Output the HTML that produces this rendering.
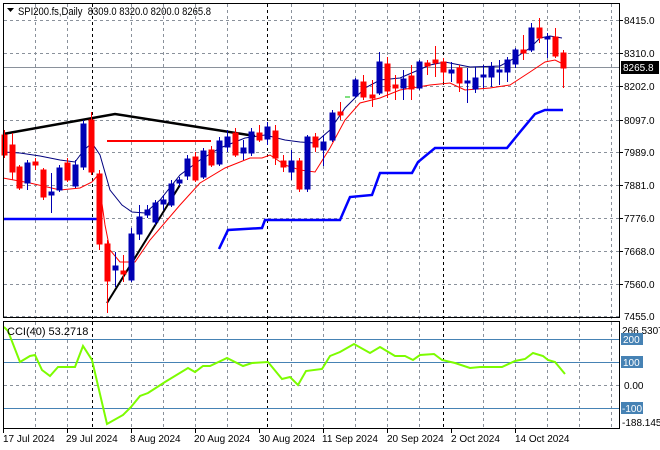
<!DOCTYPE html>
<html><head><meta charset="utf-8"><style>
html,body{margin:0;padding:0;background:#fff;}
svg{display:block;font-family:"Liberation Sans",sans-serif;}
</style></head><body>
<svg width="660" height="450" viewBox="0 0 660 450" xmlns="http://www.w3.org/2000/svg">
<rect width="660" height="450" fill="#fff"/>
<g stroke="#8a919b" stroke-dasharray="3,3" stroke-width="1">
<line x1="4" y1="20.5" x2="619" y2="20.5"/><line x1="4" y1="53.5" x2="619" y2="53.5"/><line x1="4" y1="86.5" x2="619" y2="86.5"/><line x1="4" y1="120.5" x2="619" y2="120.5"/><line x1="4" y1="152.5" x2="619" y2="152.5"/><line x1="4" y1="185.5" x2="619" y2="185.5"/><line x1="4" y1="218.5" x2="619" y2="218.5"/><line x1="4" y1="251.5" x2="619" y2="251.5"/><line x1="4" y1="284.5" x2="619" y2="284.5"/><line x1="4" y1="316.5" x2="619" y2="316.5"/>
<line x1="4" y1="385.5" x2="619" y2="385.5"/>
</g>
<g stroke="#8a919b" stroke-dasharray="3,3" stroke-width="1">
<line x1="35.5" y1="4" x2="35.5" y2="428"/><line x1="67.5" y1="4" x2="67.5" y2="428"/><line x1="131.5" y1="4" x2="131.5" y2="428"/><line x1="163.5" y1="4" x2="163.5" y2="428"/><line x1="195.5" y1="4" x2="195.5" y2="428"/><line x1="227.5" y1="4" x2="227.5" y2="428"/><line x1="291.5" y1="4" x2="291.5" y2="428"/><line x1="323.5" y1="4" x2="323.5" y2="428"/><line x1="355.5" y1="4" x2="355.5" y2="428"/><line x1="387.5" y1="4" x2="387.5" y2="428"/><line x1="419.5" y1="4" x2="419.5" y2="428"/><line x1="483.5" y1="4" x2="483.5" y2="428"/><line x1="515.5" y1="4" x2="515.5" y2="428"/><line x1="547.5" y1="4" x2="547.5" y2="428"/><line x1="579.5" y1="4" x2="579.5" y2="428"/><line x1="611.5" y1="4" x2="611.5" y2="428"/>
</g>
<g stroke="#000" stroke-dasharray="3,3" stroke-width="1">
<line x1="92.5" y1="4" x2="92.5" y2="428"/><line x1="267.5" y1="4" x2="267.5" y2="428"/><line x1="443.5" y1="4" x2="443.5" y2="428"/>
</g>
<line x1="4" y1="67.5" x2="619" y2="67.5" stroke="#8a919b"/>
<g stroke="#4682b4" stroke-width="1">
<line x1="4" y1="339.5" x2="619" y2="339.5"/><line x1="4" y1="362.5" x2="619" y2="362.5"/><line x1="4" y1="408.5" x2="619" y2="408.5"/>
</g>
<polyline fill="none" stroke="#0000ff" stroke-width="2.5" points="3,219 99,219"/>
<polyline fill="none" stroke="#0000ff" stroke-width="2.5" points="219,249 228,230 262,228 265,220 340,220 350,197 372,195 380,173 412,173 418,162 435,148 507,148 520,132 535,114 545,110 563,110"/>
<line x1="107" y1="141" x2="211" y2="141" stroke="#ff0000" stroke-width="2"/>
<polyline fill="none" stroke="#00007f" stroke-width="1" points="3,152 20,153 40,156 60,160 75,162 84,150 92,143 100,155 110,190 122,205 132,212 145,213 160,200 180,175 200,160 220,148 245,138 265,135 285,140 300,142 315,143 330,130 345,108 365,88 380,80 400,78 430,65 445,62 460,65 470,67 500,66 515,58 530,48 540,38 550,36 562,38"/>
<polyline fill="none" stroke="#ff0000" stroke-width="1" points="3,178 30,183 60,190 80,188 92,182 98,175 105,225 110,250 120,262 135,262 150,240 180,205 200,183 225,168 250,158 262,158 270,155 285,165 300,170 315,172 330,148 345,120 360,103 380,98 400,90 430,85 450,83 465,90 490,88 510,85 530,72 545,62 555,60 565,65"/>
<polyline fill="none" stroke="#000" stroke-width="2.5" points="3,134 115,114 255,136"/>
<line x1="107" y1="303" x2="180" y2="185" stroke="#000" stroke-width="2"/>
<line x1="345" y1="97" x2="350" y2="97" stroke="#00c000" stroke-width="1"/>
<g stroke-width="1">
<g stroke="#ff0000" fill="#ff0000">
<line x1="4.5" y1="130" x2="4.5" y2="158"/><rect x="2" y="135" width="5" height="20"/>
<line x1="12.5" y1="133" x2="12.5" y2="180"/><rect x="10" y="145" width="5" height="27"/>
<line x1="19.5" y1="165" x2="19.5" y2="190"/><rect x="17" y="167" width="5" height="21"/>
<line x1="35.5" y1="158" x2="35.5" y2="170"/><rect x="33" y="162" width="5" height="3"/>
<line x1="43.5" y1="168" x2="43.5" y2="200"/><rect x="41" y="170" width="5" height="27"/>
<line x1="67.5" y1="158" x2="67.5" y2="182"/><rect x="65" y="163" width="5" height="17"/>
<line x1="91.5" y1="112" x2="91.5" y2="175"/><rect x="89" y="120" width="5" height="52"/>
<line x1="99.5" y1="170" x2="99.5" y2="250"/><rect x="97" y="174" width="5" height="70"/>
<line x1="107.5" y1="240" x2="107.5" y2="313"/><rect x="105" y="244" width="5" height="37"/>
<line x1="123.5" y1="255" x2="123.5" y2="282"/><rect x="121" y="271" width="5" height="3"/>
<line x1="195.5" y1="152" x2="195.5" y2="182"/><rect x="193" y="157" width="5" height="23"/>
<line x1="211.5" y1="146" x2="211.5" y2="167"/><rect x="209" y="150" width="5" height="15"/>
<line x1="235.5" y1="128" x2="235.5" y2="157"/><rect x="233" y="133" width="5" height="22"/>
<line x1="259.5" y1="125" x2="259.5" y2="142"/><rect x="257" y="133" width="5" height="7"/>
<line x1="275.5" y1="125" x2="275.5" y2="165"/><rect x="273" y="131" width="5" height="27"/>
<line x1="283.5" y1="155" x2="283.5" y2="172"/><rect x="281" y="161" width="5" height="6"/>
<line x1="299.5" y1="158" x2="299.5" y2="192"/><rect x="297" y="161" width="5" height="28"/>
<line x1="315.5" y1="133" x2="315.5" y2="152"/><rect x="313" y="137" width="5" height="10"/>
<line x1="340.5" y1="102" x2="340.5" y2="120"/><rect x="338" y="112" width="5" height="3"/>
<line x1="363.5" y1="75" x2="363.5" y2="100"/><rect x="361" y="82" width="5" height="15"/>
<line x1="372.5" y1="80" x2="372.5" y2="107"/><rect x="370" y="95" width="5" height="3"/>
<line x1="387.5" y1="57" x2="387.5" y2="98"/><rect x="385" y="64" width="5" height="27"/>
<line x1="395.5" y1="75" x2="395.5" y2="100"/><rect x="393" y="85" width="5" height="3"/>
<line x1="411.5" y1="65" x2="411.5" y2="100"/><rect x="409" y="76" width="5" height="13"/>
<line x1="427.5" y1="60" x2="427.5" y2="75"/><rect x="425" y="63" width="5" height="3"/>
<line x1="435.5" y1="46" x2="435.5" y2="77"/><rect x="433" y="60" width="5" height="3"/>
<line x1="443.5" y1="58" x2="443.5" y2="82"/><rect x="441" y="62" width="5" height="10"/>
<line x1="459.5" y1="65" x2="459.5" y2="92"/><rect x="457" y="68" width="5" height="15"/>
<line x1="523.5" y1="35" x2="523.5" y2="60"/><rect x="521" y="50" width="5" height="3"/>
<line x1="539.5" y1="18" x2="539.5" y2="43"/><rect x="537" y="28" width="5" height="10"/>
<line x1="555.5" y1="28" x2="555.5" y2="58"/><rect x="553" y="37" width="5" height="19"/>
<line x1="563.5" y1="50" x2="563.5" y2="88"/><rect x="561" y="53" width="5" height="15"/>
</g>
<g stroke="#0000b4" fill="#0000b4">
<line x1="27.5" y1="160" x2="27.5" y2="190"/><rect x="25" y="163" width="5" height="20"/>
<line x1="51.5" y1="173" x2="51.5" y2="213"/><rect x="49" y="192" width="5" height="3"/>
<line x1="59.5" y1="165" x2="59.5" y2="192"/><rect x="57" y="168" width="5" height="22"/>
<line x1="75.5" y1="160" x2="75.5" y2="188"/><rect x="73" y="165" width="5" height="21"/>
<line x1="83.5" y1="120" x2="83.5" y2="170"/><rect x="81" y="124" width="5" height="43"/>
<line x1="115.5" y1="252" x2="115.5" y2="287"/><rect x="113" y="266" width="5" height="4"/>
<line x1="131.5" y1="228" x2="131.5" y2="282"/><rect x="129" y="234" width="5" height="46"/>
<line x1="139.5" y1="205" x2="139.5" y2="240"/><rect x="137" y="217" width="5" height="17"/>
<line x1="147.5" y1="205" x2="147.5" y2="218"/><rect x="145" y="210" width="5" height="5"/>
<line x1="155.5" y1="200" x2="155.5" y2="225"/><rect x="153" y="203" width="5" height="19"/>
<line x1="163.5" y1="195" x2="163.5" y2="210"/><rect x="161" y="200" width="5" height="4"/>
<line x1="171.5" y1="180" x2="171.5" y2="207"/><rect x="169" y="184" width="5" height="21"/>
<line x1="179.5" y1="177" x2="179.5" y2="186"/><rect x="177" y="180" width="5" height="3"/>
<line x1="187.5" y1="155" x2="187.5" y2="180"/><rect x="185" y="159" width="5" height="17"/>
<line x1="203.5" y1="148" x2="203.5" y2="179"/><rect x="201" y="151" width="5" height="26"/>
<line x1="219.5" y1="137" x2="219.5" y2="166"/><rect x="217" y="141" width="5" height="23"/>
<line x1="227.5" y1="130" x2="227.5" y2="152"/><rect x="225" y="137" width="5" height="10"/>
<line x1="243.5" y1="140" x2="243.5" y2="160"/><rect x="241" y="148" width="5" height="5"/>
<line x1="251.5" y1="128" x2="251.5" y2="156"/><rect x="249" y="132" width="5" height="21"/>
<line x1="267.5" y1="122" x2="267.5" y2="145"/><rect x="265" y="127" width="5" height="12"/>
<line x1="291.5" y1="150" x2="291.5" y2="180"/><rect x="289" y="161" width="5" height="11"/>
<line x1="307.5" y1="135" x2="307.5" y2="192"/><rect x="305" y="137" width="5" height="52"/>
<line x1="323.5" y1="135" x2="323.5" y2="166"/><rect x="321" y="142" width="5" height="8"/>
<line x1="332.5" y1="110" x2="332.5" y2="142"/><rect x="330" y="113" width="5" height="27"/>
<line x1="355.5" y1="78" x2="355.5" y2="98"/><rect x="353" y="80" width="5" height="16"/>
<line x1="379.5" y1="52" x2="379.5" y2="95"/><rect x="377" y="62" width="5" height="31"/>
<line x1="403.5" y1="70" x2="403.5" y2="100"/><rect x="401" y="79" width="5" height="9"/>
<line x1="419.5" y1="60" x2="419.5" y2="90"/><rect x="417" y="62" width="5" height="26"/>
<line x1="451.5" y1="62" x2="451.5" y2="82"/><rect x="449" y="70" width="5" height="3"/>
<line x1="467.5" y1="68" x2="467.5" y2="103"/><rect x="465" y="81" width="5" height="2"/>
<line x1="475.5" y1="67" x2="475.5" y2="93"/><rect x="473" y="78" width="5" height="11"/>
<line x1="483.5" y1="65" x2="483.5" y2="88"/><rect x="481" y="75" width="5" height="2"/>
<line x1="491.5" y1="62" x2="491.5" y2="87"/><rect x="489" y="67" width="5" height="10"/>
<line x1="499.5" y1="60" x2="499.5" y2="85"/><rect x="497" y="70" width="5" height="2"/>
<line x1="507.5" y1="57" x2="507.5" y2="82"/><rect x="505" y="60" width="5" height="12"/>
<line x1="515.5" y1="48" x2="515.5" y2="68"/><rect x="513" y="50" width="5" height="14"/>
<line x1="531.5" y1="23" x2="531.5" y2="52"/><rect x="529" y="28" width="5" height="22"/>
<line x1="547.5" y1="33" x2="547.5" y2="58"/><rect x="545" y="37" width="5" height="2"/>
</g>
</g>
<polyline fill="none" stroke="#7cfc00" stroke-width="2" points="4,327 8,331 20,362 30,356 35,355 42,370 50,376 58,367 75,367 83,346 92,360 107,424 123,415 131,407 140,396 148,393 165,382 188,368 195,372 203,366 210,366 227,358 243,366 252,363 268,362 282,379 290,377 298,385 306,371 322,369 330,356 340,352 354,344 370,353 380,347 395,356 405,356 413,360 420,355 434,354 442,360 455,363 470,368 480,367 502,367 515,361 525,359 533,353 543,356 548,360 555,362 565,374"/>
<rect x="3.5" y="3.5" width="616" height="314" fill="none" stroke="#000"/>
<rect x="3.5" y="321.5" width="616" height="107" fill="none" stroke="#000"/>
<path d="M7,8 L14,8 L10.5,12 Z" fill="#000"/>
<text x="18" y="15" font-size="11" fill="#000" textLength="193" lengthAdjust="spacingAndGlyphs" xml:space="preserve">SPI200.fs,Daily  8309.0 8320.0 8200.0 8265.8</text>
<text x="7" y="335" font-size="11" fill="#000">CCI(40) 53.2718</text>
<g font-size="10" fill="#000">
<text x="624" y="24">8415.0</text><text x="624" y="57">8310.0</text><text x="624" y="90">8202.0</text><text x="624" y="124">8097.0</text><text x="624" y="156">7989.0</text><text x="624" y="189">7881.0</text><text x="624" y="222">7776.0</text><text x="624" y="255">7668.0</text><text x="624" y="288">7560.0</text><text x="624" y="320">7455.0</text>
<text x="622" y="334">266.5307</text><text x="624" y="389">0.00</text><text x="622" y="426">-188.1459</text>
</g>
<g stroke="#000"><line x1="620" y1="20.5" x2="623" y2="20.5"/><line x1="620" y1="53.5" x2="623" y2="53.5"/><line x1="620" y1="86.5" x2="623" y2="86.5"/><line x1="620" y1="120.5" x2="623" y2="120.5"/><line x1="620" y1="152.5" x2="623" y2="152.5"/><line x1="620" y1="185.5" x2="623" y2="185.5"/><line x1="620" y1="218.5" x2="623" y2="218.5"/><line x1="620" y1="251.5" x2="623" y2="251.5"/><line x1="620" y1="284.5" x2="623" y2="284.5"/></g>
<rect x="621" y="61" width="38" height="13" fill="#000"/>
<text x="623" y="71" font-size="10" fill="#fff">8265.8</text>
<rect x="621" y="333" width="22" height="12" fill="#4682b4"/><text x="623" y="343" font-size="10" fill="#fff">200</text>
<rect x="621" y="356" width="22" height="12" fill="#4682b4"/><text x="623" y="366" font-size="10" fill="#fff">100</text>
<rect x="621" y="402" width="22" height="12" fill="#4682b4"/><text x="622" y="412" font-size="10" fill="#fff">-100</text>
<g font-size="10" fill="#000">
<text x="3" y="442">17 Jul 2024</text><text x="66" y="442">29 Jul 2024</text><text x="130" y="442">8 Aug 2024</text><text x="194" y="442">20 Aug 2024</text><text x="259" y="442">30 Aug 2024</text><text x="322" y="442">11 Sep 2024</text><text x="387" y="442">20 Sep 2024</text><text x="451" y="442">2 Oct 2024</text><text x="515" y="442">14 Oct 2024</text>
</g>
<g stroke="#000"><line x1="3.5" y1="429" x2="3.5" y2="433"/><line x1="67.5" y1="429" x2="67.5" y2="433"/><line x1="131.5" y1="429" x2="131.5" y2="433"/><line x1="195.5" y1="429" x2="195.5" y2="433"/><line x1="259.5" y1="429" x2="259.5" y2="433"/><line x1="323.5" y1="429" x2="323.5" y2="433"/><line x1="387.5" y1="429" x2="387.5" y2="433"/><line x1="451.5" y1="429" x2="451.5" y2="433"/><line x1="515.5" y1="429" x2="515.5" y2="433"/></g>
</svg>
</body></html>
